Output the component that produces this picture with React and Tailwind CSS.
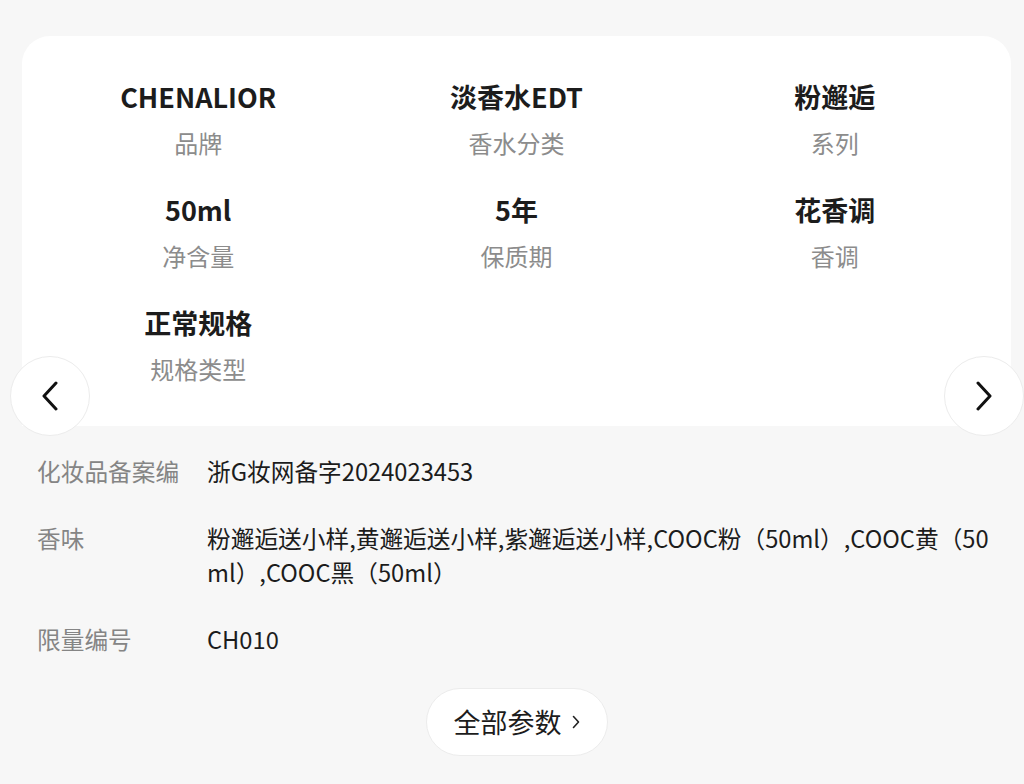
import React from 'react';

const specs = [
  { value: 'CHENALIOR', label: '品牌' },
  { value: '淡香水EDT', label: '香水分类' },
  { value: '粉邂逅', label: '系列' },
  { value: '50ml', label: '净含量' },
  { value: '5年', label: '保质期' },
  { value: '花香调', label: '香调' },
  { value: '正常规格', label: '规格类型' },
];

const details = [
  { label: '化妆品备案编', value: '浙G妆网备字2024023453' },
  {
    label: '香味',
    value: '粉邂逅送小样,黄邂逅送小样,紫邂逅送小样,COOC粉（50ml）,COOC黄（50ml）,COOC黑（50ml）',
  },
  { label: '限量编号', value: 'CH010' },
];

const Chevron = ({ dir }) => (
  <svg width="18" height="30" viewBox="0 0 18 30" fill="none">
    <path
      d={dir === 'left' ? 'M15 2 L3 15 L15 28' : 'M3 2 L15 15 L3 28'}
      stroke="#111"
      strokeWidth="3"
      strokeLinecap="round"
      strokeLinejoin="round"
    />
  </svg>
);

export default function App() {
  return (
    <div
      className="relative min-h-[784px] w-full overflow-hidden bg-[#f7f7f7] pt-[36px]"
      style={{ fontFamily: '"Noto Sans CJK SC", "Noto Sans", sans-serif' }}
    >
      <div className="ml-[22px] mr-[13px]">
        {/* spec grid card */}
        <div className="rounded-t-[28px] bg-white px-[17px] pt-[41px] pb-[40px]">
          <div className="grid grid-cols-3 gap-y-[30px]">
            {specs.map((s) => (
              <div key={s.label} className="flex flex-col items-center">
                <div className="text-[27px] font-bold leading-[40px] text-[#1c1c1c]">{s.value}</div>
                <div className="mt-[9px] text-[24px] leading-[34px] text-[#8c8c8c]">{s.label}</div>
              </div>
            ))}
          </div>
        </div>

        {/* detail rows */}
        <div className="flex flex-col gap-[33px] pt-[28px] pl-[15px] pr-[10px]">
          {details.map((d) => (
            <div key={d.label} className="flex text-[23.7px] leading-[34px]">
              <div className="w-[170px] shrink-0 text-[#858585]">{d.label}</div>
              <div className="min-w-0 flex-1 break-all text-[#1c1c1c]">{d.value}</div>
            </div>
          ))}
        </div>

        <div className="flex justify-center pt-[32px]">
          <button className="flex h-[68px] w-[182px] items-center justify-center gap-[10px] rounded-full border border-[#ececec] bg-white text-[27px] text-[#1c1c1c]">
            <span>全部参数</span>
            <svg width="8" height="14" viewBox="0 0 8 14" fill="none">
              <path d="M1.5 1.5 L6.5 7 L1.5 12.5" stroke="#222" strokeWidth="1.6" strokeLinecap="round" strokeLinejoin="round" />
            </svg>
          </button>
        </div>
      </div>

      {/* carousel arrows */}
      <button className="absolute left-[10px] top-[356px] flex h-[80px] w-[80px] items-center justify-center rounded-full border border-[#ececec] bg-white">
        <Chevron dir="left" />
      </button>
      <button className="absolute left-[944px] top-[356px] flex h-[80px] w-[80px] items-center justify-center rounded-full border border-[#ececec] bg-white">
        <Chevron dir="right" />
      </button>
    </div>
  );
}
